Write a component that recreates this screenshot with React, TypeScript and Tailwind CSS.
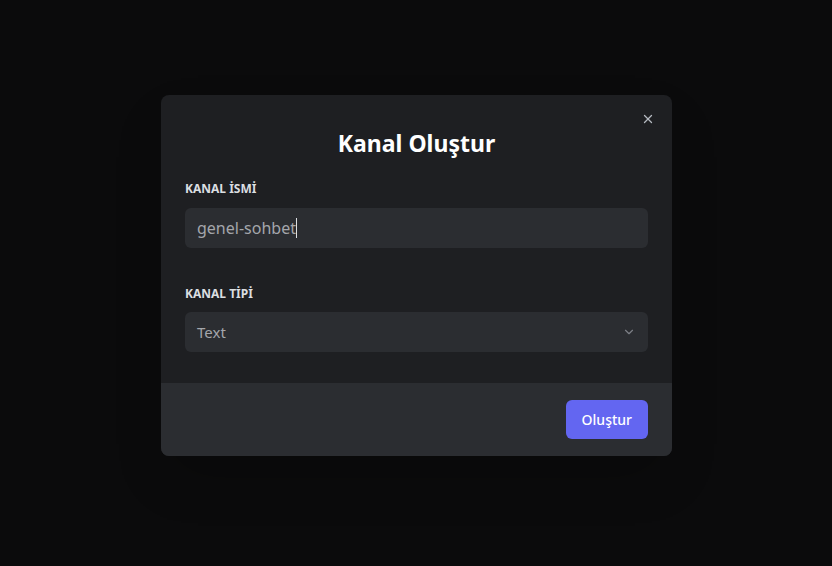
import { ChevronDown, X } from "lucide-react";

export default function App() {
  return (
    <div
      className="w-full h-[566px] bg-[#0b0b0c] flex items-start justify-center pt-[95px]"
      style={{ fontFamily: '"Noto Sans", "Open Sans", sans-serif' }}
    >
      <div className="relative w-[511px] ml-px rounded-lg bg-[#1e1f22] overflow-hidden shadow-2xl">
        <button className="absolute right-[13px] top-[13px] p-1 text-[#b5bac1]">
          <X size={14} strokeWidth={2.25} />
        </button>

        <div className="px-6 pt-8 pb-[31px]">
          <h2 className="text-center text-white text-[23px] font-bold leading-8">Kanal Oluştur</h2>

          <label className="block mt-[22px] text-xs font-bold uppercase text-[#dbdee1] leading-4">
            KANAL İSMİ
          </label>
          <div className="mt-[11px] h-10 rounded-md bg-[#2b2d31] flex items-center px-3 text-base text-[#a4a6ab]">
            <span>genel-sohbet</span>
            <span className="w-px h-5 bg-[#dbdee1]" />
          </div>

          <label className="block mt-[38px] text-xs font-bold uppercase text-[#dbdee1] leading-4">
            KANAL TİPİ
          </label>
          <div className="mt-[10px] h-10 rounded-md bg-[#2b2d31] flex items-center justify-between px-3 text-[15px] text-[#a4a6ab]">
            <span>Text</span>
            <ChevronDown size={14} className="text-[#7c7f86]" />
          </div>
        </div>

        <div className="bg-[#2b2d31] h-[73px] px-6 flex items-center justify-end">
          <button className="h-[39px] px-4 rounded-md bg-[#6366f1] text-white text-sm font-medium">
            Oluştur
          </button>
        </div>
      </div>
    </div>
  );
}
